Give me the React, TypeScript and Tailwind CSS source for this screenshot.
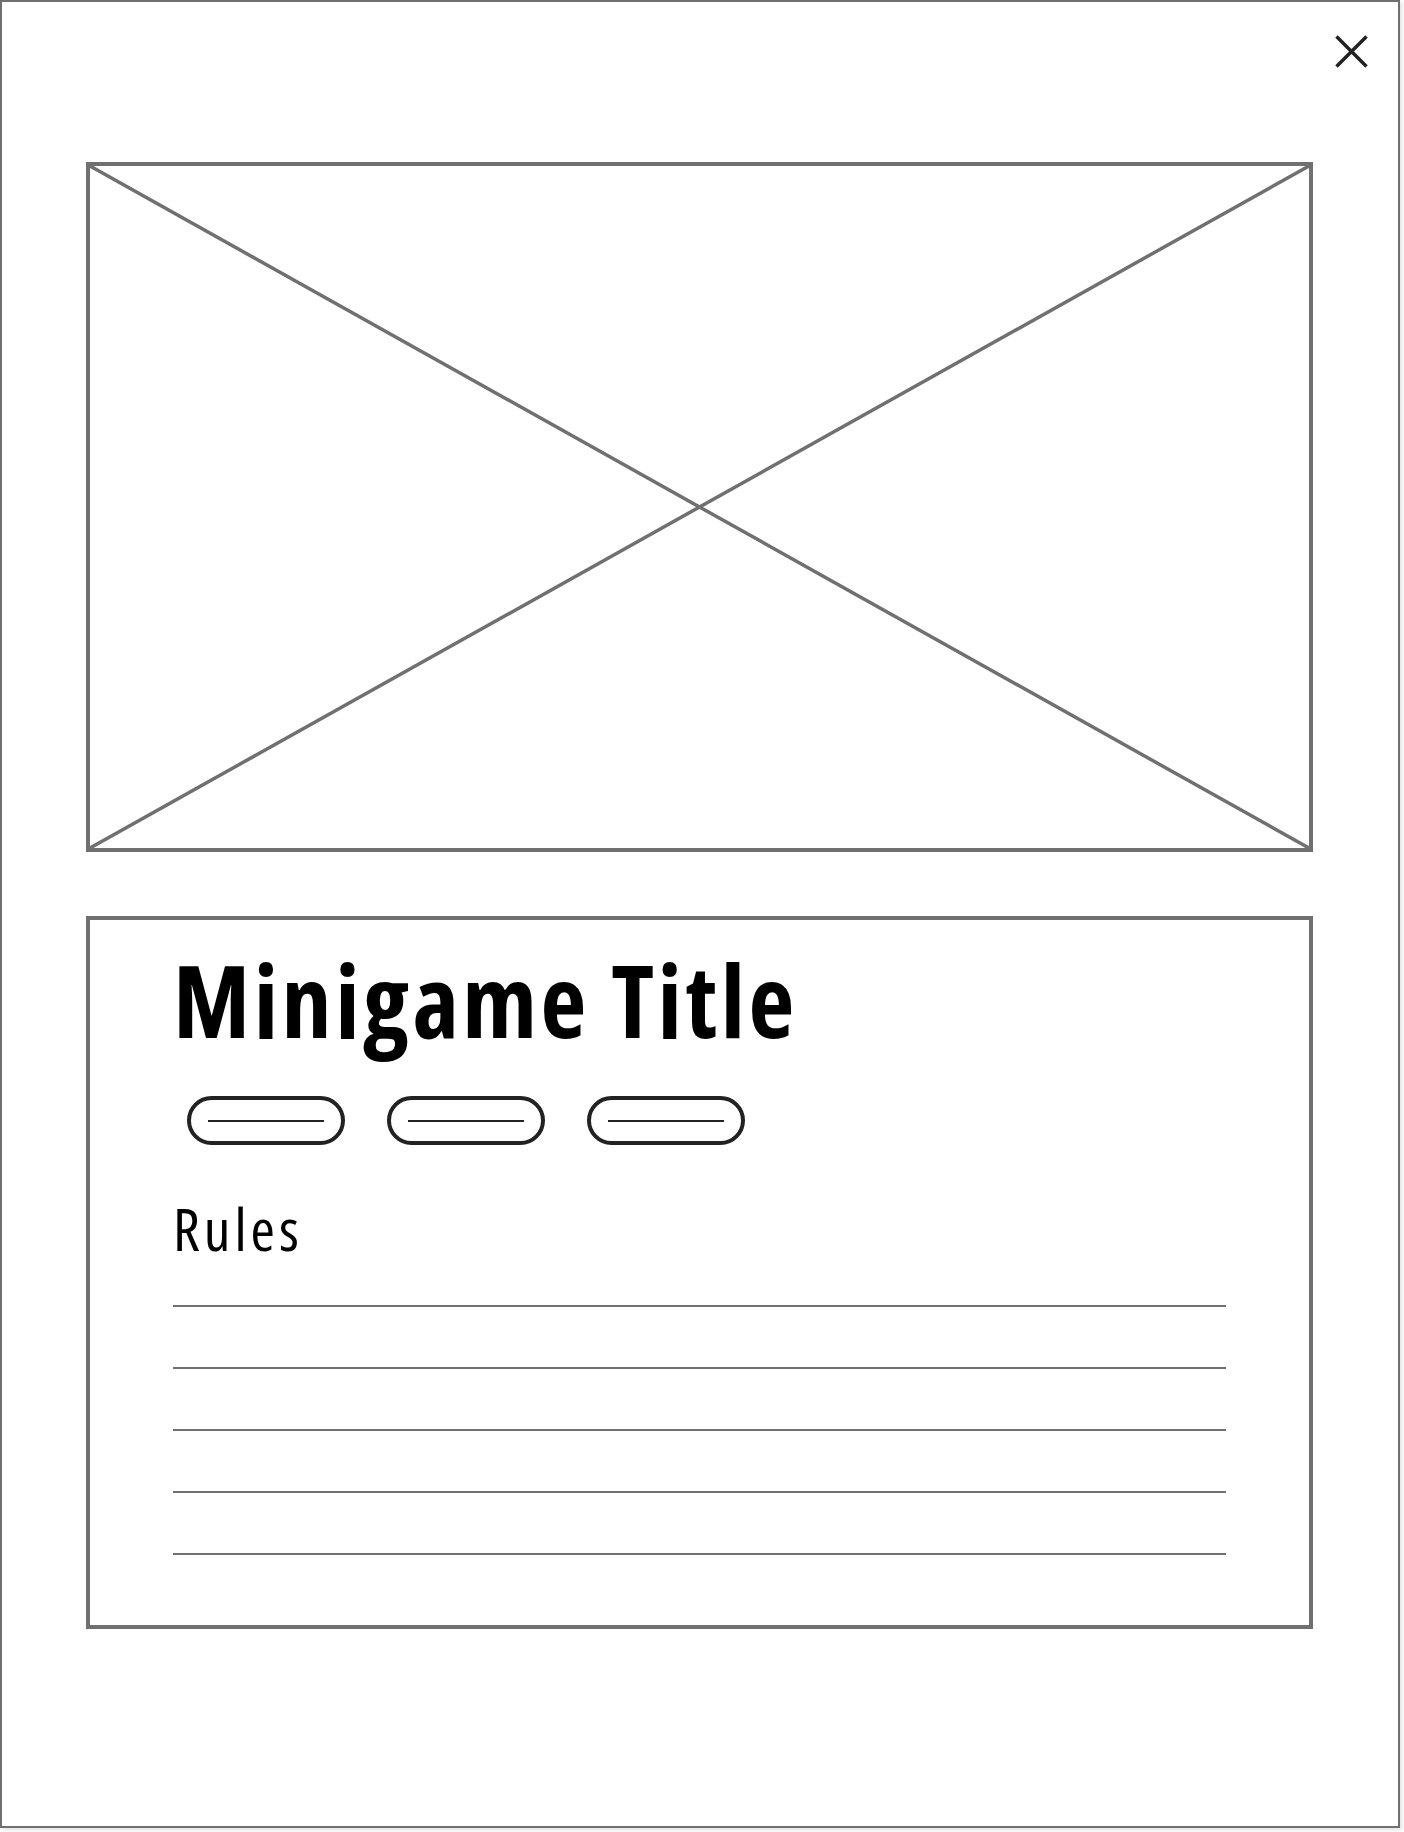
import React from "react";

const lines = [0, 1, 2, 3, 4];

export default function App() {
  return (
    <div className="w-[1404px] h-[1832px] bg-white">
      <div className="w-[1400px] h-[1828px] border-2 border-[#707070] bg-white shadow-[2px_2px_4px_rgba(0,0,0,0.12)] flex flex-col">
        {/* close */}
        <div className="flex justify-end pt-[33px] pr-[30px] shrink-0">
          <svg width="33" height="33" viewBox="0 0 33 33">
            <path d="M1.5 1.5 L31.5 31.5 M31.5 1.5 L1.5 31.5" stroke="#222" strokeWidth="3.5" fill="none" />
          </svg>
        </div>

        {/* image placeholder */}
        <div className="ml-[84px] mt-[94px] w-[1227px] h-[690px] shrink-0 border-4 border-[#707070]">
          <svg width="1219" height="682" viewBox="0 0 1219 682">
            <path d="M0 0 L1219 682 M1219 0 L0 682" stroke="#707070" strokeWidth="3.5" fill="none" />
          </svg>
        </div>

        {/* info */}
        <div className="ml-[84px] mt-[64px] w-[1227px] h-[713px] shrink-0 border-4 border-[#707070] pl-[83px] flex flex-col">
          <h1 className="mt-[29px] text-[100px] leading-none font-bold text-black tracking-[3.5px] font-['Open_Sans',sans-serif] [font-stretch:75%]">
            Minigame Title
          </h1>
          <div className="flex gap-[42px] mt-[47px] ml-[14px]">
            {[0, 1, 2].map((i) => (
              <div key={i} className="w-[158px] h-[49px] rounded-full border-4 border-[#222] flex items-center justify-center">
                <div className="w-[116px] h-[2px] bg-[#222]" />
              </div>
            ))}
          </div>
          <p className="mt-[54px] text-[59px] leading-none text-black tracking-[4px] font-['Open_Sans',sans-serif] [font-stretch:75%]">Rules</p>
          <div className="flex flex-col gap-[60px] mt-[47px]">
            {lines.map((i) => (
              <div key={i} className="w-[1053px] h-[2px] bg-[#707070]" />
            ))}
          </div>
        </div>
      </div>
    </div>
  );
}
